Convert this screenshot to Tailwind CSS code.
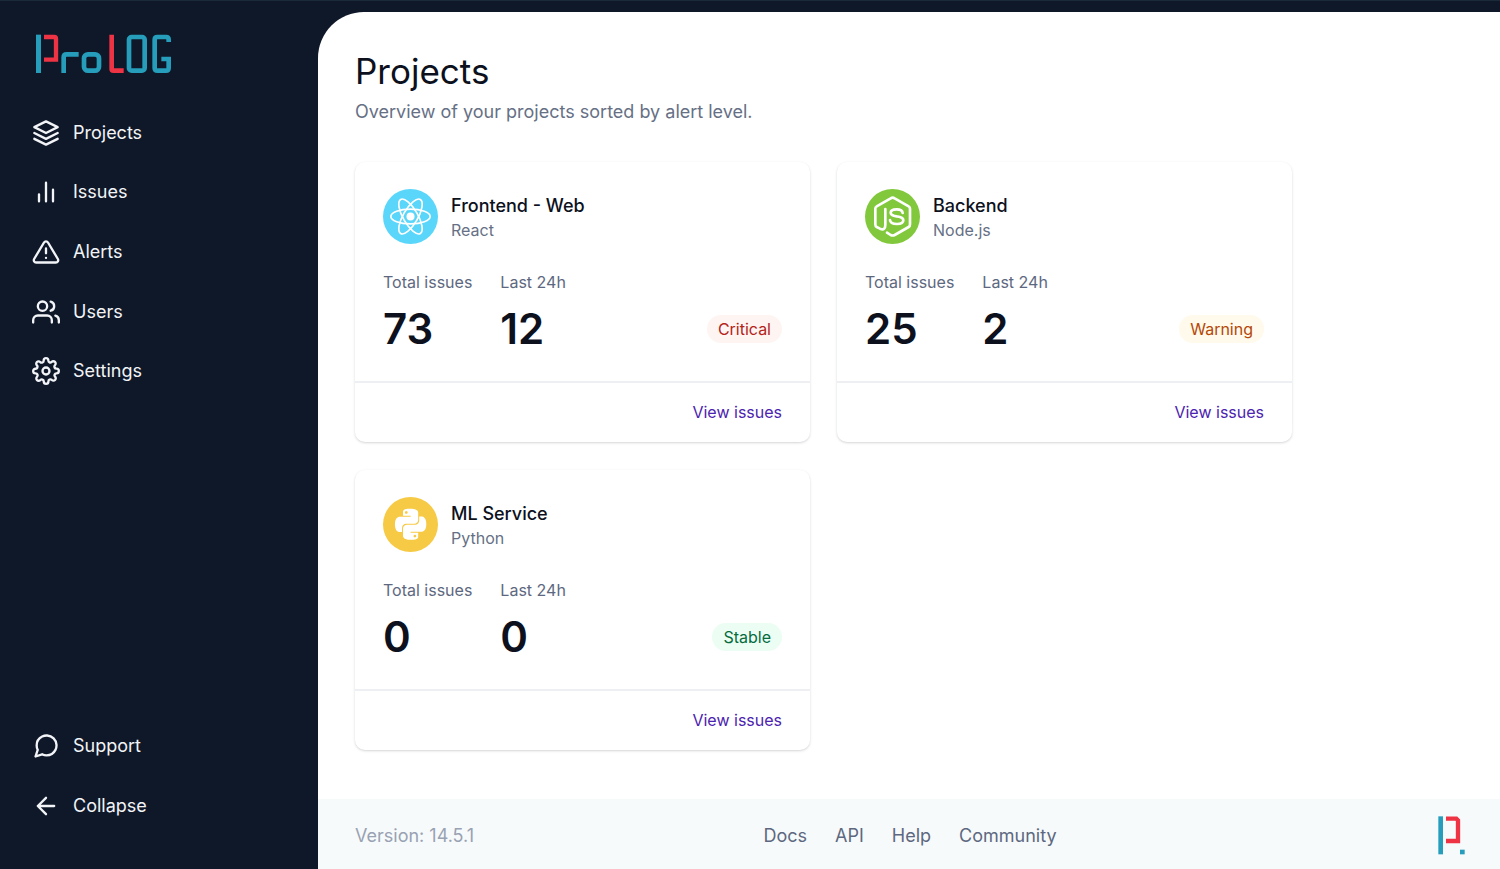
<!DOCTYPE html>
<html lang="en">
<head>
<meta charset="utf-8">
<meta name="viewport" content="width=device-width, initial-scale=1">
<title>ProLog - Projects</title>
<script src="https://cdn.jsdelivr.net/npm/@tailwindcss/browser@4"></script>
</head>
<body class="flex min-h-screen bg-[#0f1828] border-t border-[#1a2a38] font-['Inter','Liberation_Sans',sans-serif]">

<aside class="flex w-[318px] shrink-0 flex-col pl-8 pt-[33px] pb-[33px] text-lg text-[#f2f4f7]">
  <a href="#" aria-label="ProLog home" class="ml-1 block">
    <svg class="block" width="136" height="40" viewBox="48 42 408 120" fill="none" stroke="#259dbb" stroke-width="14">
      <path d="M55.500 44V159" stroke-width="15"/>
      <path d="M72 51H103Q108 51 108 56V119H72" stroke="#ee3344" stroke-width="13"/>
      <path d="M131 159V112Q131 103 140 103H176"/>
      <rect x="192" y="103" width="45" height="49" rx="12"/>
      <path d="M275 44V147Q275 152 280 152H311" stroke="#ee3344"/>
      <rect x="327" y="51" width="47" height="101" rx="8"/>
      <path d="M446 66V59Q446 51 438 51H412Q404 51 404 59V144Q404 152 412 152H438Q446 152 446 144V117H424"/>
    </svg>
  </a>

  <nav aria-label="Main" class="mt-[29px] grid h-[298px] auto-rows-fr">
    <a href="#" class="flex items-center gap-[13px]">
      <svg width="28" height="28" viewBox="0 0 24 24" fill="none" stroke="currentColor" stroke-width="2" stroke-linecap="round" stroke-linejoin="round"><path d="M12 2 2 7l10 5 10-5-10-5z"/><path d="m2 17 10 5 10-5"/><path d="m2 12 10 5 10-5"/></svg>
      Projects</a>
    <a href="#" class="flex items-center gap-[13px]">
      <svg width="28" height="28" viewBox="0 0 24 24" fill="none" stroke="currentColor" stroke-width="2" stroke-linecap="round" stroke-linejoin="round"><path d="M18 20V10M12 20V4M6 20v-6"/></svg>
      Issues</a>
    <a href="#" class="flex items-center gap-[13px]">
      <svg width="28" height="28" viewBox="0 0 24 24" fill="none" stroke="currentColor" stroke-width="2" stroke-linecap="round" stroke-linejoin="round"><path d="M10.290 3.860 1.820 18a2 2 0 0 0 1.710 3h16.940a2 2 0 0 0 1.710-3L13.710 3.860a2 2 0 0 0-3.420 0z"/><path d="M12 9v4M12 17h.01"/></svg>
      Alerts</a>
    <a href="#" class="flex items-center gap-[13px]">
      <svg width="28" height="28" viewBox="0 0 24 24" fill="none" stroke="currentColor" stroke-width="2" stroke-linecap="round" stroke-linejoin="round"><path d="M17 21v-2a4 4 0 0 0-4-4H5a4 4 0 0 0-4 4v2"/><circle cx="9" cy="7" r="4"/><path d="M23 21v-2a4 4 0 0 0-3-3.870M16 3.130a4 4 0 0 1 0 7.750"/></svg>
      Users</a>
    <a href="#" class="flex items-center gap-[13px]">
      <svg width="28" height="28" viewBox="0 0 24 24" fill="none" stroke="currentColor" stroke-width="2" stroke-linecap="round" stroke-linejoin="round"><circle cx="12" cy="12" r="3"/><path d="M19.400 15a1.650 1.650 0 0 0 .33 1.820l.06.06a2 2 0 0 1 0 2.830 2 2 0 0 1-2.830 0l-.06-.06a1.650 1.650 0 0 0-1.820-.33 1.650 1.650 0 0 0-1 1.510V21a2 2 0 0 1-2 2 2 2 0 0 1-2-2v-.09A1.650 1.650 0 0 0 9 19.400a1.650 1.650 0 0 0-1.820.33l-.06.06a2 2 0 0 1-2.830 0 2 2 0 0 1 0-2.830l.06-.06a1.650 1.650 0 0 0 .33-1.820 1.650 1.650 0 0 0-1.510-1H3a2 2 0 0 1-2-2 2 2 0 0 1 2-2h.09A1.650 1.650 0 0 0 4.600 9a1.650 1.650 0 0 0-.33-1.820l-.06-.06a2 2 0 0 1 0-2.830 2 2 0 0 1 2.830 0l.06.06a1.650 1.650 0 0 0 1.820.33H9a1.650 1.650 0 0 0 1-1.510V3a2 2 0 0 1 2-2 2 2 0 0 1 2 2v.09a1.650 1.650 0 0 0 1 1.510 1.650 1.650 0 0 0 1.820-.33l.06-.06a2 2 0 0 1 2.830 0 2 2 0 0 1 0 2.830l-.06.06a1.650 1.650 0 0 0-.33 1.820V9a1.650 1.650 0 0 0 1.510 1H21a2 2 0 0 1 2 2 2 2 0 0 1-2 2h-.09a1.650 1.650 0 0 0-1.510 1z"/></svg>
      Settings</a>
  </nav>

  <div class="mt-auto flex flex-col">
    <a href="#" class="flex h-[60px] items-center gap-[13px]">
      <svg width="28" height="28" viewBox="0 0 24 24" fill="none" stroke="currentColor" stroke-width="2" stroke-linecap="round" stroke-linejoin="round"><path d="M21 11.500a8.380 8.380 0 0 1-.9 3.800 8.500 8.500 0 0 1-7.600 4.700 8.380 8.380 0 0 1-3.800-.9L3 21l1.900-5.700a8.380 8.380 0 0 1-.9-3.800 8.500 8.500 0 0 1 4.700-7.600 8.380 8.380 0 0 1 3.800-.9h.5a8.480 8.480 0 0 1 8 8v.5z"/></svg>
      Support</a>
    <button type="button" class="flex h-[60px] cursor-pointer items-center gap-[13px]">
      <svg width="28" height="28" viewBox="0 0 24 24" fill="none" stroke="currentColor" stroke-width="2" stroke-linecap="round" stroke-linejoin="round"><path d="M19 12H5M12 19l-7-7 7-7"/></svg>
      Collapse</button>
  </div>
</aside>

<div class="mt-[11px] flex min-w-0 flex-1 flex-col overflow-hidden rounded-tl-[46px] bg-white">
  <main class="flex-1 px-[37px] pt-9">
    <h1 class="text-[35px] leading-[46px] text-[#0c111d]">Projects</h1>
    <p class="mt-1 text-lg leading-[27px] text-[#667085]">Overview of your projects sorted by alert level.</p>

    <ul class="mt-[37px] grid max-w-[937px] grid-cols-2 gap-x-[27px] gap-y-7">
      <li class="rounded-[10px] bg-white shadow-[0_1px_3px_rgba(16,24,40,0.12),0_1px_2px_rgba(16,24,40,0.06)]">
        <div class="px-7 pt-[27px] pb-[25px]">
          <div class="flex items-center gap-[13px]">
            <svg width="55" height="55" viewBox="0 0 165 165" fill="none"><circle cx="82.500" cy="82.500" r="82.500" fill="#5ad6fb"/><circle cx="82.500" cy="82.500" r="12" fill="#fff"/><g stroke="#fff" stroke-width="5"><ellipse cx="82.500" cy="82.500" rx="59" ry="22"/><ellipse cx="82.500" cy="82.500" rx="59" ry="22" transform="rotate(60 82.500 82.500)"/><ellipse cx="82.500" cy="82.500" rx="59" ry="22" transform="rotate(120 82.500 82.500)"/></g></svg>
            <div>
              <h2 class="text-lg leading-[27px] font-medium text-[#0c111d]">Frontend - Web</h2>
              <p class="text-base leading-[23px] text-[#667085]">React</p>
            </div>
          </div>
          <div class="mt-[27px] flex items-end">
            <dl class="flex gap-7 text-[#0c111d]">
              <div><dt class="text-base leading-[23px] text-[#5d6880]">Total issues</dt><dd class="mt-2 text-[42px] leading-[54px] font-semibold">73</dd></div>
              <div><dt class="text-base leading-[23px] text-[#5d6880]">Last 24h</dt><dd class="mt-2 text-[42px] leading-[54px] font-semibold">12</dd></div>
            </dl>
            <span class="mb-[13px] ml-auto rounded-full bg-[#fef5f3] px-[11px] py-[2px] text-base leading-6 text-[#b42318]">Critical</span>
          </div>
        </div>
        <div class="flex justify-end border-t-2 border-[#edeff2] px-7 py-[17px]"><a href="#" class="text-base leading-[25px] text-[#4c23b0]">View issues</a></div>
      </li>

      <li class="rounded-[10px] bg-white shadow-[0_1px_3px_rgba(16,24,40,0.12),0_1px_2px_rgba(16,24,40,0.06)]">
        <div class="px-7 pt-[27px] pb-[25px]">
          <div class="flex items-center gap-[13px]">
            <svg width="55" height="55" viewBox="0 0 165 165" fill="none"><circle cx="82.500" cy="82.500" r="82.500" fill="#82c83c"/><g stroke="#fff" stroke-width="8" stroke-linecap="round" stroke-linejoin="round"><path d="M66 131L77 138Q83 141 89 138L131 114Q135 112 135 106V59Q135 54 131 52L89 28Q83 24 77 28L35 52Q31 54 31 59V106Q31 112 35 114L45 119Q61 126 61 108V60"/><path d="M113 72Q112 61 95 61Q77 61 77 71Q77 79 95 82Q115 84 115 94Q115 105 96 105Q76 105 75 93"/></g></svg>
            <div>
              <h2 class="text-lg leading-[27px] font-medium text-[#0c111d]">Backend</h2>
              <p class="text-base leading-[23px] text-[#667085]">Node.js</p>
            </div>
          </div>
          <div class="mt-[27px] flex items-end">
            <dl class="flex gap-7 text-[#0c111d]">
              <div><dt class="text-base leading-[23px] text-[#5d6880]">Total issues</dt><dd class="mt-2 text-[42px] leading-[54px] font-semibold">25</dd></div>
              <div><dt class="text-base leading-[23px] text-[#5d6880]">Last 24h</dt><dd class="mt-2 text-[42px] leading-[54px] font-semibold">2</dd></div>
            </dl>
            <span class="mb-[13px] ml-auto rounded-full bg-[#fffaeb] px-[11px] py-[2px] text-base leading-6 text-[#b54708]">Warning</span>
          </div>
        </div>
        <div class="flex justify-end border-t-2 border-[#edeff2] px-7 py-[17px]"><a href="#" class="text-base leading-[25px] text-[#4c23b0]">View issues</a></div>
      </li>

      <li class="rounded-[10px] bg-white shadow-[0_1px_3px_rgba(16,24,40,0.12),0_1px_2px_rgba(16,24,40,0.06)]">
        <div class="px-7 pt-[27px] pb-[25px]">
          <div class="flex items-center gap-[13px]">
            <svg width="55" height="55" viewBox="0 0 165 165"><circle cx="82.500" cy="82.500" r="82.500" fill="#f7ca45"/><path transform="translate(36 35) scale(3.900)" fill="#fff" d="M14.250.18l.9.2.73.26.59.3.45.32.34.34.25.34.16.33.1.3.04.26.02.2-.01.13V8.500l-.05.63-.13.55-.21.46-.26.38-.3.31-.33.25-.35.19-.35.14-.33.1-.3.07-.26.04-.21.02H8.770l-.69.05-.59.14-.5.22-.41.27-.33.32-.27.35-.2.36-.15.37-.1.35-.07.32-.04.27-.02.21v3.060H3.170l-.21-.03-.28-.07-.32-.12-.35-.18-.36-.26-.36-.36-.35-.46-.32-.59-.28-.73-.21-.88-.14-1.050-.05-1.230.06-1.220.16-1.040.24-.87.32-.71.36-.57.4-.44.42-.33.42-.24.4-.16.36-.1.32-.05.24-.01h.16l.06.01h8.160v-.83H6.180l-.01-2.750-.02-.37.05-.34.11-.31.17-.28.25-.26.31-.23.38-.2.44-.18.51-.15.58-.12.64-.1.71-.06.77-.04.84-.02 1.270.05zm-6.300 1.980l-.23.33-.08.41.08.41.23.34.33.22.41.09.41-.09.33-.22.23-.34.08-.41-.08-.41-.23-.33-.33-.22-.41-.09-.41.09zm13.090 3.950l.28.06.32.12.35.18.36.27.36.35.35.47.32.59.28.73.21.88.14 1.040.05 1.230-.06 1.230-.16 1.040-.24.86-.32.71-.36.57-.4.45-.42.33-.42.24-.4.16-.36.09-.32.05-.24.02-.16-.01h-8.220v.82h5.840l.01 2.760.02.36-.05.34-.11.31-.17.29-.25.25-.31.24-.38.2-.44.17-.51.15-.58.13-.64.09-.71.07-.77.04-.84.01-1.270-.04-1.070-.14-.9-.2-.73-.25-.59-.3-.45-.33-.34-.34-.25-.34-.16-.33-.1-.3-.04-.25-.02-.2.01-.13v-5.340l.05-.64.13-.54.21-.46.26-.38.3-.32.33-.24.35-.2.35-.14.33-.1.3-.06.26-.04.21-.02.13-.01h5.840l.69-.05.59-.14.5-.21.41-.28.33-.32.27-.35.2-.36.15-.36.1-.35.07-.32.04-.28.02-.21V6.070h2.090l.14.01zm-6.470 14.250l-.23.33-.08.41.08.41.23.33.33.23.41.08.41-.08.33-.23.23-.33.08-.41-.08-.41-.23-.33-.33-.23-.41-.08-.41.08z"/></svg>
            <div>
              <h2 class="text-lg leading-[27px] font-medium text-[#0c111d]">ML Service</h2>
              <p class="text-base leading-[23px] text-[#667085]">Python</p>
            </div>
          </div>
          <div class="mt-[27px] flex items-end">
            <dl class="flex gap-7 text-[#0c111d]">
              <div><dt class="text-base leading-[23px] text-[#5d6880]">Total issues</dt><dd class="mt-2 text-[42px] leading-[54px] font-semibold">0</dd></div>
              <div><dt class="text-base leading-[23px] text-[#5d6880]">Last 24h</dt><dd class="mt-2 text-[42px] leading-[54px] font-semibold">0</dd></div>
            </dl>
            <span class="mb-[13px] ml-auto rounded-full bg-[#ecfdf3] px-[11px] py-[2px] text-base leading-6 text-[#056c40]">Stable</span>
          </div>
        </div>
        <div class="flex justify-end border-t-2 border-[#edeff2] px-7 py-[17px]"><a href="#" class="text-base leading-[25px] text-[#4c23b0]">View issues</a></div>
      </li>
    </ul>
  </main>

  <footer class="grid h-[70px] grid-cols-[1fr_auto_1fr] items-center bg-[#f7fafb] pt-[3px] pr-[35px] pl-[37px] text-lg">
    <p class="text-[#98a2b3]">Version: 14.5.1</p>
    <nav aria-label="Footer" class="flex gap-7 text-[#5d6880]">
      <a href="#">Docs</a><a href="#">API</a><a href="#">Help</a><a href="#">Community</a>
    </nav>
    <svg class="justify-self-end" role="img" aria-label="ProLog" width="27" height="39" viewBox="114 77 81 117" fill="none"><path d="M122 78V192" stroke="#259dbb" stroke-width="14"/><path d="M138 85H169L174 90V152H138" stroke="#ee3344" stroke-width="13"/><path d="M180 178h14v14h-14z" fill="#259dbb"/></svg>
  </footer>
</div>
</body>
</html>
